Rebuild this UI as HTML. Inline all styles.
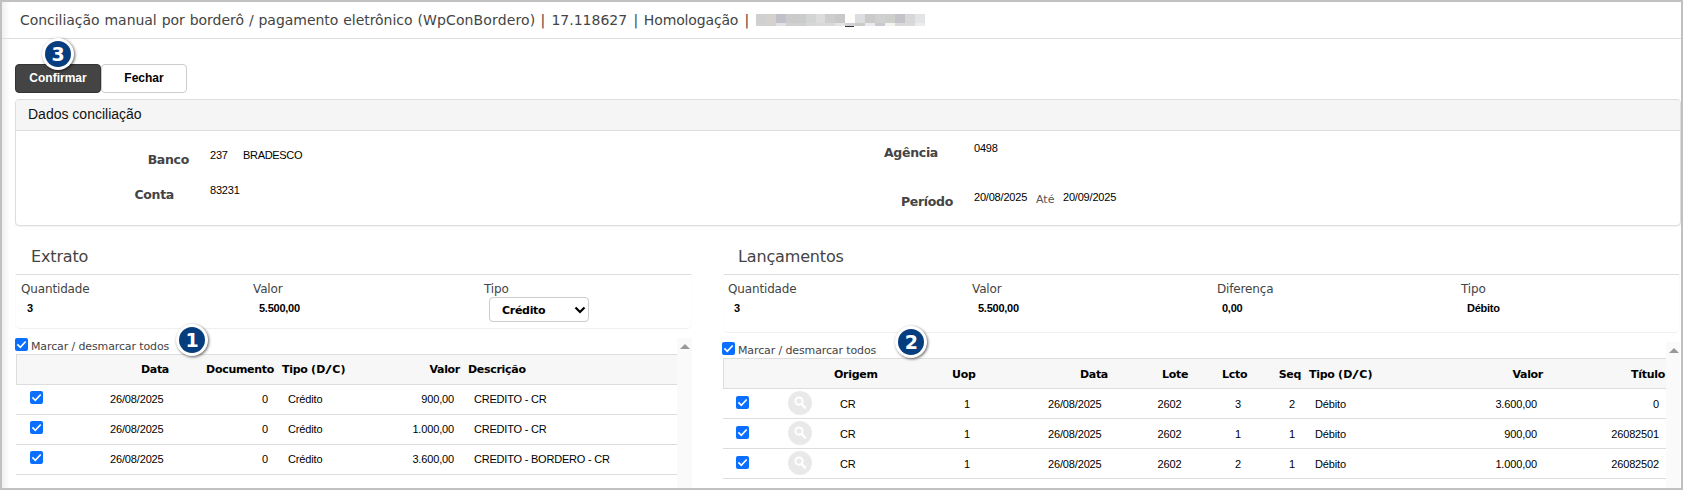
<!DOCTYPE html>
<html lang="pt-BR">
<head>
<meta charset="utf-8">
<title>Conciliação manual por borderô / pagamento eletrônico</title>
<style>
*{box-sizing:border-box;margin:0;padding:0}
html,body{width:1683px;height:490px;overflow:hidden;background:#fff}
body{position:relative;font-family:"Liberation Sans",sans-serif;font-size:11px;color:#000}
.abs{position:absolute;white-space:nowrap}
.frame{position:absolute;left:0;top:0;width:1683px;height:490px;border:2px solid #c0c0c0;pointer-events:none;z-index:50}
.lgrad{position:absolute;left:2px;top:2px;width:8px;height:486px;background:linear-gradient(to right,#f0f0f0,#fff);z-index:0}
.v{font-family:"DejaVu Sans","Liberation Sans",sans-serif}
.title{left:20px;top:10px;font-size:14px;word-spacing:0.55px;color:#444;line-height:20px}
.title .a{letter-spacing:-0.04px}.title .b{letter-spacing:0.13px}.title .p{margin-right:1.25px}.title .c{margin-right:1.25px}.title .p2{margin-right:0.75px}.title .d{letter-spacing:-0.15px;margin-right:1.4px}
.hline{position:absolute;height:1px;background:#ddd}
.btn{position:absolute;top:64px;height:29px;width:86px;border-radius:4px;font-weight:bold;font-size:12px;text-align:center;line-height:27px;border:1px solid #ccc}
.btn.dark{background:#444;border-color:#333;color:#fff}
.btn.light{background:#fff;color:#000}
.panel{position:absolute;left:15px;top:99px;width:1666px;height:127px;border:1px solid #ddd;border-radius:4px;background:#fff;box-shadow:0 1px 1px rgba(0,0,0,.05)}
.panel .hd{height:31px;background:#f5f5f5;border-bottom:1px solid #ddd;border-radius:3px 3px 0 0;font-size:14px;line-height:29px;padding-left:12px;color:#111}
.lbl{font-family:"DejaVu Sans","Liberation Sans",sans-serif;font-weight:bold;font-size:12.5px;letter-spacing:-0.3px;color:#444}
.val{font-size:11px;letter-spacing:-0.2px;color:#000}
.sec{font-family:"DejaVu Sans","Liberation Sans",sans-serif;font-size:16px;letter-spacing:-0.15px;color:#444}
.fl{font-family:"DejaVu Sans","Liberation Sans",sans-serif;font-size:12px;letter-spacing:-0.15px;color:#444}
.fv{font-size:11px;font-weight:bold;letter-spacing:-0.25px;color:#000}
.badge{position:absolute;width:32px;height:32px;border-radius:50%;background:#fff;box-shadow:1px 1px 3px rgba(0,0,0,.6);z-index:10}
.badge i{position:absolute;left:3px;top:3px;width:26px;height:26px;border-radius:50%;background:#053d7e;color:#fff;font-style:normal;font-family:"DejaVu Sans","Liberation Sans",sans-serif;font-weight:bold;font-size:19px;line-height:26px;text-align:center}
.cb{position:absolute;width:13px;height:13px;border-radius:2px;background:#0a6eff}
.cb svg{position:absolute;left:0;top:0}
.thead{position:absolute;height:31px;background:#f7f7f7;border-top:1px solid #ddd;border-bottom:1px solid #ddd;border-left:1px solid #ddd}
.th{font-family:"DejaVu Sans","Liberation Sans",sans-serif;font-weight:bold;font-size:11px;letter-spacing:-0.3px;color:#000}
.th b{font-weight:bold;display:inline-block;padding:0 1.4px;transform:scaleX(1.6)}
.th u{text-decoration:none;letter-spacing:0.1px}
.td{font-size:11px;letter-spacing:-0.15px;color:#000}
.r{text-align:right}
.ml{font-size:11px;letter-spacing:-0.12px;color:#444}
.sel{border:1px solid #ccc;border-radius:4px;background:#fff;font-weight:bold;font-size:11px;letter-spacing:-0.3px;line-height:25px;padding-left:12px;color:#000}
.sel svg{position:absolute;left:84px;top:8px}
.track{background:#fafafa}
.arrow{width:0;height:0;border-left:5px solid transparent;border-right:5px solid transparent;border-bottom:5px solid #999}
</style>
</head>
<body>
<div class="lgrad"></div><div class="frame"></div>
<div id="title" class="abs v title"><span class="a">Conciliação manual por borderô / pagamento eletrônico </span><span class="b">(WpConBordero) </span><span class="p">| </span><span class="c">17.118627 </span><span class="p2">| </span><span class="d">Homologação </span>|</div>
<div class="hline" style="left:2px;top:38px;width:1679px"></div>
<div class="abs" id="redact" style="left:756px;top:14px;width:169px;height:13px;overflow:hidden"><i style="position:absolute;left:0.00px;top:0;width:10px;height:9px;background:#d0d0d0"></i><i style="position:absolute;left:0.00px;top:9px;width:10px;height:3px;background:#d2d2d2"></i><i style="position:absolute;left:9.92px;top:0;width:10px;height:9px;background:#d5d2cd"></i><i style="position:absolute;left:9.92px;top:9px;width:10px;height:3px;background:#d4d2d0"></i><i style="position:absolute;left:19.84px;top:0;width:10px;height:9px;background:#bfc0c8"></i><i style="position:absolute;left:19.84px;top:9px;width:10px;height:3px;background:#dfe1e6"></i><i style="position:absolute;left:29.76px;top:0;width:10px;height:9px;background:#cbcbcb"></i><i style="position:absolute;left:29.76px;top:9px;width:10px;height:3px;background:#d0d0d0"></i><i style="position:absolute;left:39.68px;top:0;width:10px;height:9px;background:#cbcbcb"></i><i style="position:absolute;left:39.68px;top:9px;width:10px;height:3px;background:#d0d0d0"></i><i style="position:absolute;left:49.60px;top:0;width:10px;height:9px;background:#d3d5d4"></i><i style="position:absolute;left:49.60px;top:9px;width:10px;height:3px;background:#d6d7d6"></i><i style="position:absolute;left:59.52px;top:0;width:10px;height:9px;background:#dcdcdc"></i><i style="position:absolute;left:59.52px;top:9px;width:10px;height:3px;background:#d9d9d9"></i><i style="position:absolute;left:69.44px;top:0;width:10px;height:9px;background:#cdcdcd"></i><i style="position:absolute;left:69.44px;top:9px;width:10px;height:3px;background:#dad9d8"></i><i style="position:absolute;left:79.36px;top:0;width:10px;height:9px;background:#c8c8c8"></i><i style="position:absolute;left:79.36px;top:9px;width:10px;height:3px;background:#e6e3e1"></i><i style="position:absolute;left:89.28px;top:0;width:10px;height:9px;background:#fffefb"></i><i style="position:absolute;left:89.28px;top:9px;width:10px;height:3px;background:#d0d2d8"></i><i style="position:absolute;left:99.20px;top:0;width:10px;height:9px;background:#dcdde0"></i><i style="position:absolute;left:99.20px;top:9px;width:10px;height:3px;background:#cfcaca"></i><i style="position:absolute;left:109.12px;top:0;width:10px;height:9px;background:#cccac9"></i><i style="position:absolute;left:109.12px;top:9px;width:10px;height:3px;background:#eaebee"></i><i style="position:absolute;left:119.04px;top:0;width:10px;height:9px;background:#d0d0d0"></i><i style="position:absolute;left:119.04px;top:9px;width:10px;height:3px;background:#c9c9d0"></i><i style="position:absolute;left:128.96px;top:0;width:10px;height:9px;background:#cdcfcd"></i><i style="position:absolute;left:128.96px;top:9px;width:10px;height:3px;background:#f4f4ee"></i><i style="position:absolute;left:138.88px;top:0;width:10px;height:9px;background:#c4c3c9"></i><i style="position:absolute;left:138.88px;top:9px;width:10px;height:3px;background:#d9d8dc"></i><i style="position:absolute;left:148.80px;top:0;width:10px;height:9px;background:#d8d8d8"></i><i style="position:absolute;left:148.80px;top:9px;width:10px;height:3px;background:#dadada"></i><i style="position:absolute;left:158.72px;top:0;width:10px;height:9px;background:#e3e4e6"></i><i style="position:absolute;left:158.72px;top:9px;width:10px;height:3px;background:#ebecee"></i><i style="position:absolute;left:89px;top:12px;width:9px;height:1px;background:#333"></i></div>
<div class="badge" style="left:42px;top:38px"><i>3</i></div>
<div class="btn dark" style="left:15px"><span id="b1">Confirmar</span></div>
<div class="btn light" style="left:101px"><span id="b2">Fechar</span></div>
<div class="panel"><div class="hd"><span id="ph">Dados conciliação</span></div></div>
<div id="l1" class="abs lbl r" style="right:1494px;top:152px;">Banco</div>
<div id="v1" class="abs val" style="left:210px;top:149px;">237</div>
<div id="v1b" class="abs val" style="left:243px;top:149px;letter-spacing:-0.32px">BRADESCO</div>
<div id="l2" class="abs lbl r" style="right:1509px;top:187px;">Conta</div>
<div id="v2" class="abs val" style="left:210px;top:184px;">83231</div>
<div id="l3" class="abs lbl r" style="right:745px;top:145px;">Agência</div>
<div id="v3" class="abs val" style="left:974px;top:142px;">0498</div>
<div id="l4" class="abs lbl r" style="right:730px;top:194px;">Período</div>
<div id="v4" class="abs val" style="left:974px;top:191px;">20/08/2025</div>
<div id="v4b" class="abs v" style="left:1036px;top:193px;font-size:11px;color:#555">Até</div>
<div id="v4c" class="abs val" style="left:1063px;top:191px;">20/09/2025</div>
<div id="sx" class="abs sec" style="left:31px;top:247px;">Extrato</div>
<div class="hline" style="left:15px;top:274px;width:676px"></div>
<div class="abs" style="left:15px;top:274px;width:677px;height:55px;border:1px solid #fbfbfb;border-bottom-color:#efefef;border-top:none;border-radius:0 0 5px 5px"></div>
<div id="q1" class="abs fl" style="left:21px;top:282px;">Quantidade</div>
<div class="abs fv" style="left:27px;top:302px;">3</div>
<div class="abs fl" style="left:253px;top:282px;">Valor</div>
<div id="fv1" class="abs fv" style="left:259px;top:302px;">5.500,00</div>
<div class="abs fl" style="left:484px;top:282px;">Tipo</div>
<div class="abs sel" style="left:489px;top:297px;width:100px;height:25px"><span class="v" id="selt">Crédito</span><svg width="12" height="8" viewBox="0 0 12 8"><path d="M1.5 1.5 L6 6 L10.5 1.5" fill="none" stroke="#000" stroke-width="2.2"/></svg></div>
<div class="cb" style="left:15px;top:338px"><svg width="13" height="13" viewBox="0 0 13 13"><path d="M2.4 6.4 L5.3 9.3 L10.7 3.5" fill="none" stroke="#fff" stroke-width="1.7"/></svg></div>
<div id="m1" class="abs v ml" style="left:31px;top:340px;">Marcar / desmarcar todos</div>
<div class="badge" style="left:176px;top:324px"><i>1</i></div>
<div class="thead" style="left:16px;top:354px;width:661px"></div>
<div class="abs track" style="left:677px;top:338px;width:15px;height:150px"></div>
<div class="abs arrow" style="left:680px;top:344px"></div>
<div id="h1" class="abs th r" style="right:1514px;top:363px;">Data</div>
<div id="h2" class="abs th r" style="right:1409px;top:363px;">Documento</div>
<div id="h3" class="abs th" style="left:282px;top:363px;">Tipo <u>(D<b>/</b>C)</u></div>
<div id="h4" class="abs th r" style="right:1223px;top:363px;">Valor</div>
<div id="h5" class="abs th" style="left:468px;top:363px;">Descrição</div>
<div class="hline" style="left:16px;top:414px;width:661px"></div>
<div class="cb" style="left:29.5px;top:391px"><svg width="13" height="13" viewBox="0 0 13 13"><path d="M2.4 6.4 L5.3 9.3 L10.7 3.5" fill="none" stroke="#fff" stroke-width="1.7"/></svg></div>
<div id="d0" class="abs td" style="left:110px;top:393px;">26/08/2025</div>
<div class="abs td r" style="right:1415px;top:393px;">0</div>
<div class="abs td" style="left:288px;top:393px;">Crédito</div>
<div class="abs td r" style="right:1229px;top:393px;">900,00</div>
<div class="abs td" style="left:474px;top:393px;letter-spacing:-0.21px">CREDITO - CR</div>
<div class="hline" style="left:16px;top:444px;width:661px"></div>
<div class="cb" style="left:29.5px;top:421px"><svg width="13" height="13" viewBox="0 0 13 13"><path d="M2.4 6.4 L5.3 9.3 L10.7 3.5" fill="none" stroke="#fff" stroke-width="1.7"/></svg></div>
<div id="d1" class="abs td" style="left:110px;top:423px;">26/08/2025</div>
<div class="abs td r" style="right:1415px;top:423px;">0</div>
<div class="abs td" style="left:288px;top:423px;">Crédito</div>
<div class="abs td r" style="right:1229px;top:423px;">1.000,00</div>
<div class="abs td" style="left:474px;top:423px;letter-spacing:-0.21px">CREDITO - CR</div>
<div class="hline" style="left:16px;top:474px;width:661px"></div>
<div class="cb" style="left:29.5px;top:451px"><svg width="13" height="13" viewBox="0 0 13 13"><path d="M2.4 6.4 L5.3 9.3 L10.7 3.5" fill="none" stroke="#fff" stroke-width="1.7"/></svg></div>
<div id="d2" class="abs td" style="left:110px;top:453px;">26/08/2025</div>
<div class="abs td r" style="right:1415px;top:453px;">0</div>
<div class="abs td" style="left:288px;top:453px;">Crédito</div>
<div class="abs td r" style="right:1229px;top:453px;">3.600,00</div>
<div class="abs td" style="left:474px;top:453px;letter-spacing:-0.21px">CREDITO - BORDERO - CR</div>
<div id="sl" class="abs sec" style="left:738px;top:247px;">Lançamentos</div>
<div class="hline" style="left:723px;top:274px;width:957px"></div>
<div class="abs" style="left:723px;top:274px;width:957px;height:59px;border:1px solid #fbfbfb;border-bottom-color:#efefef;border-top:none;border-radius:0 0 5px 5px"></div>
<div class="abs fl" style="left:728px;top:282px;">Quantidade</div>
<div class="abs fv" style="left:734px;top:302px;">3</div>
<div class="abs fl" style="left:972px;top:282px;">Valor</div>
<div class="abs fv" style="left:978px;top:302px;">5.500,00</div>
<div class="abs fl" style="left:1217px;top:282px;">Diferença</div>
<div class="abs fv" style="left:1222px;top:302px;">0,00</div>
<div class="abs fl" style="left:1461px;top:282px;">Tipo</div>
<div class="abs fv" style="left:1467px;top:302px;">Débito</div>
<div class="cb" style="left:722px;top:342px"><svg width="13" height="13" viewBox="0 0 13 13"><path d="M2.4 6.4 L5.3 9.3 L10.7 3.5" fill="none" stroke="#fff" stroke-width="1.7"/></svg></div>
<div id="m2" class="abs v ml" style="left:738px;top:344px;">Marcar / desmarcar todos</div>
<div class="badge" style="left:895.3px;top:326px"><i>2</i></div>
<div class="thead" style="left:723px;top:358px;width:943px"></div>
<div class="abs track" style="left:1666px;top:342px;width:14px;height:146px"></div>
<div class="abs arrow" style="left:1669px;top:348px"></div>
<div id="g1" class="abs th" style="left:834px;top:368px;">Origem</div>
<div id="g2" class="abs th" style="left:952px;top:368px;">Uop</div>
<div id="g3" class="abs th r" style="right:575px;top:368px;">Data</div>
<div id="g4" class="abs th" style="left:1162px;top:368px;">Lote</div>
<div id="g5" class="abs th" style="left:1222px;top:368px;">Lcto</div>
<div id="g6" class="abs th r" style="right:382px;top:368px;">Seq</div>
<div id="g7" class="abs th" style="left:1309px;top:368px;">Tipo <u>(D<b>/</b>C)</u></div>
<div id="g8" class="abs th r" style="right:140px;top:368px;">Valor</div>
<div id="g9" class="abs th r" style="right:18px;top:368px;">Título</div>
<div class="hline" style="left:723px;top:418px;width:943px"></div>
<div class="cb" style="left:736px;top:396px"><svg width="13" height="13" viewBox="0 0 13 13"><path d="M2.4 6.4 L5.3 9.3 L10.7 3.5" fill="none" stroke="#fff" stroke-width="1.7"/></svg></div>
<div class="abs" style="left:788px;top:391px;width:24px;height:24px"><svg width="24" height="24" viewBox="0 0 24 24"><circle cx="12" cy="12" r="12" fill="#e9e9e9"/><circle cx="11" cy="10.1" r="3.6" fill="none" stroke="#fff" stroke-width="2"/><path d="M13.8 13.1 L17 16.6" stroke="#fff" stroke-width="2.4" stroke-linecap="round"/></svg></div>
<div class="abs td" style="left:840px;top:398px;">CR</div>
<div class="abs td" style="left:964px;top:398px;">1</div>
<div class="abs td" style="left:1048px;top:398px;">26/08/2025</div>
<div class="abs td" style="left:1157.5px;top:398px;">2602</div>
<div class="abs td" style="left:1235px;top:398px;">3</div>
<div class="abs td r" style="right:388px;top:398px;">2</div>
<div class="abs td" style="left:1315px;top:398px;">Débito</div>
<div class="abs td r" style="right:146px;top:398px;">3.600,00</div>
<div class="abs td r" style="right:24px;top:398px;">0</div>
<div class="hline" style="left:723px;top:448px;width:943px"></div>
<div class="cb" style="left:736px;top:426px"><svg width="13" height="13" viewBox="0 0 13 13"><path d="M2.4 6.4 L5.3 9.3 L10.7 3.5" fill="none" stroke="#fff" stroke-width="1.7"/></svg></div>
<div class="abs" style="left:788px;top:421px;width:24px;height:24px"><svg width="24" height="24" viewBox="0 0 24 24"><circle cx="12" cy="12" r="12" fill="#e9e9e9"/><circle cx="11" cy="10.1" r="3.6" fill="none" stroke="#fff" stroke-width="2"/><path d="M13.8 13.1 L17 16.6" stroke="#fff" stroke-width="2.4" stroke-linecap="round"/></svg></div>
<div class="abs td" style="left:840px;top:428px;">CR</div>
<div class="abs td" style="left:964px;top:428px;">1</div>
<div class="abs td" style="left:1048px;top:428px;">26/08/2025</div>
<div class="abs td" style="left:1157.5px;top:428px;">2602</div>
<div class="abs td" style="left:1235px;top:428px;">1</div>
<div class="abs td r" style="right:388px;top:428px;">1</div>
<div class="abs td" style="left:1315px;top:428px;">Débito</div>
<div class="abs td r" style="right:146px;top:428px;">900,00</div>
<div class="abs td r" style="right:24px;top:428px;">26082501</div>
<div class="hline" style="left:723px;top:478px;width:943px"></div>
<div class="cb" style="left:736px;top:456px"><svg width="13" height="13" viewBox="0 0 13 13"><path d="M2.4 6.4 L5.3 9.3 L10.7 3.5" fill="none" stroke="#fff" stroke-width="1.7"/></svg></div>
<div class="abs" style="left:788px;top:451px;width:24px;height:24px"><svg width="24" height="24" viewBox="0 0 24 24"><circle cx="12" cy="12" r="12" fill="#e9e9e9"/><circle cx="11" cy="10.1" r="3.6" fill="none" stroke="#fff" stroke-width="2"/><path d="M13.8 13.1 L17 16.6" stroke="#fff" stroke-width="2.4" stroke-linecap="round"/></svg></div>
<div class="abs td" style="left:840px;top:458px;">CR</div>
<div class="abs td" style="left:964px;top:458px;">1</div>
<div class="abs td" style="left:1048px;top:458px;">26/08/2025</div>
<div class="abs td" style="left:1157.5px;top:458px;">2602</div>
<div class="abs td" style="left:1235px;top:458px;">2</div>
<div class="abs td r" style="right:388px;top:458px;">1</div>
<div class="abs td" style="left:1315px;top:458px;">Débito</div>
<div class="abs td r" style="right:146px;top:458px;">1.000,00</div>
<div class="abs td r" style="right:24px;top:458px;">26082502</div>
</body>
</html>
